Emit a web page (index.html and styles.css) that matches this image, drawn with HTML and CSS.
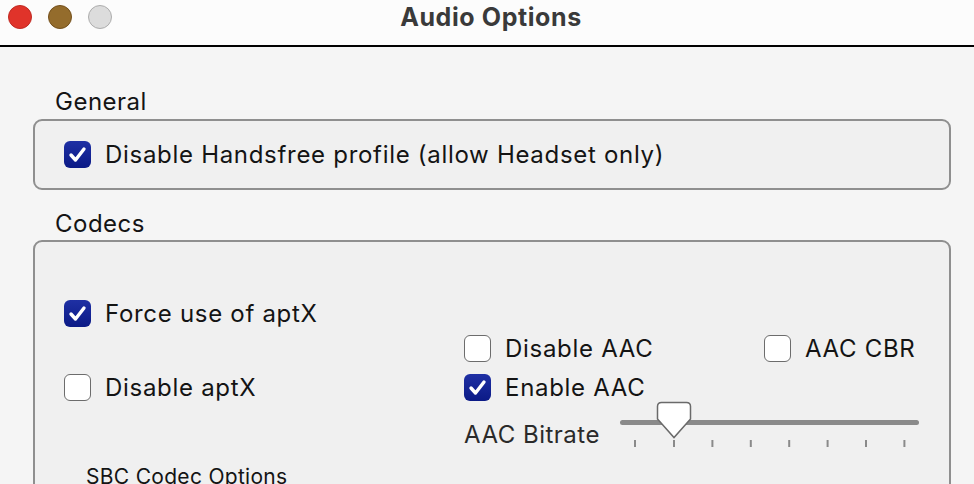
FILE: index.html
```html
<!DOCTYPE html>
<html lang="en">
<head>
    <meta charset="UTF-8">
    <title>Audio Options</title>
    <link rel="stylesheet" href="styles.css">
</head>
<body>
    <header class="titlebar">
        <div class="lights">
            <span class="light light-close"></span>
            <span class="light light-min"></span>
            <span class="light light-zoom"></span>
        </div>
        <h1 class="title">Audio Options</h1>
        <div></div>
    </header>

    <main class="content">
        <h2 class="group-label">General</h2>
        <section class="group group-general">
            <label class="check">
                <span class="box checked"><svg viewBox="0 0 27 27"><path d="M7 14 L11.5 19 L20 8"/></svg></span>
                Disable Handsfree profile (allow Headset only)
            </label>
        </section>

        <h2 class="group-label">Codecs</h2>
        <section class="group group-codecs">
            <div class="codec-cols">
                <div class="col col-aptx">
                    <label class="check">
                        <span class="box checked"><svg viewBox="0 0 27 27"><path d="M7 14 L11.5 19 L20 8"/></svg></span>
                        Force use of aptX
                    </label>
                    <label class="check">
                        <span class="box"></span>
                        Disable aptX
                    </label>
                </div>
                <div class="col col-aac">
                    <div class="aac-row">
                        <label class="check check-wide">
                            <span class="box"></span>
                            Disable AAC
                        </label>
                        <label class="check">
                            <span class="box"></span>
                            AAC CBR
                        </label>
                    </div>
                    <label class="check">
                        <span class="box checked"><svg viewBox="0 0 27 27"><path d="M7 14 L11.5 19 L20 8"/></svg></span>
                        Enable AAC
                    </label>
                    <div class="bitrate">
                        <span class="bitrate-label">AAC Bitrate</span>
                        <svg class="slider" width="310" height="50" viewBox="0 0 310 50">
                            <line class="track" x1="7.5" y1="22.5" x2="301.5" y2="22.5"/>
                            <g class="ticks">
                                <line x1="20" y1="40" x2="20" y2="47"/>
                                <line x1="59" y1="40" x2="59" y2="47"/>
                                <line x1="97.4" y1="40" x2="97.4" y2="47"/>
                                <line x1="135.8" y1="40" x2="135.8" y2="47"/>
                                <line x1="174.2" y1="40" x2="174.2" y2="47"/>
                                <line x1="212.6" y1="40" x2="212.6" y2="47"/>
                                <line x1="251" y1="40" x2="251" y2="47"/>
                                <line x1="289.4" y1="40" x2="289.4" y2="47"/>
                            </g>
                            <path class="knob" d="M46.5 2.5 H71.5 Q75.5 2.5 75.5 6.5 V19 L59 37.5 L42.5 19 V6.5 Q42.5 2.5 46.5 2.5 Z"/>
                        </svg>
                    </div>
                </div>
            </div>
            <h3 class="sub-label">SBC Codec Options</h3>
        </section>
    </main>
</body>
</html>
```

FILE: styles.css
```css
body {
    margin: 0;
    background-color: #f5f5f5;
    font-family: Inter, "Noto Sans", sans-serif;
    color: #141414;
    overflow: hidden;
}

.titlebar {
    display: grid;
    grid-template-columns: 1fr auto 1fr;
    align-items: start;
    height: 47px;
    padding-top: 5px;
    box-sizing: border-box;
    background-color: #fcfcfc;
    border-bottom: 2px solid #000;
}

.lights {
    display: flex;
    gap: 16px;
    padding-left: 8px;
}

.light {
    width: 22px;
    height: 22px;
    border-radius: 50%;
    border: 1px solid;
}

.light-close {
    background-color: #e0332a;
    border-color: #c02a22;
}

.light-min {
    background-color: #946c2c;
    border-color: #74501c;
}

.light-zoom {
    background-color: #dcdcdc;
    border-color: #adadad;
}

.title {
    margin: 0;
    padding-left: 8px;
    font-size: 25px;
    line-height: 24px;
    font-weight: 700;
    letter-spacing: 0.6px;
    color: #3a3a3a;
}

.content {
    padding: 42px 23px 0 33px;
}

.group-label {
    margin: 0 0 3px 22px;
    font-size: 24px;
    font-weight: 400;
    line-height: 26px;
    letter-spacing: 0.5px;
}

.group-label:first-child {
    margin-bottom: 4px;
}

.group {
    background-color: #f0f0f0;
    border: 2px solid #8f8f8f;
    border-radius: 9px;
}

.group-general {
    height: 67px;
    display: flex;
    align-items: center;
    padding-left: 29px;
    margin-bottom: 21px;
}

.check {
    display: flex;
    align-items: center;
    gap: 14px;
    height: 36px;
    font-size: 24px;
    letter-spacing: 0.7px;
    white-space: nowrap;
}

.check-wide {
    width: 300px;
}

.box {
    box-sizing: border-box;
    width: 27px;
    height: 27px;
    flex: none;
    border-radius: 6px;
    background-color: #fff;
    border: 1.5px solid #6c6c6c;
}

.box.checked {
    border: none;
    background: linear-gradient(#1f30a4, #0b1a86);
}

.box svg {
    display: block;
    width: 27px;
    height: 27px;
}

.box svg path {
    fill: none;
    stroke: #fff;
    stroke-width: 3.4;
    stroke-linecap: round;
    stroke-linejoin: round;
}

.group-codecs {
    height: 300px;
    padding-left: 29px;
}

.codec-cols {
    display: flex;
}

.col {
    display: flex;
    flex-direction: column;
}

.col-aptx {
    width: 400px;
    padding-top: 53px;
    gap: 38px;
}

.col-aac {
    padding-top: 88px;
    gap: 3px;
}

.aac-row {
    display: flex;
}

.bitrate {
    display: flex;
    align-items: flex-start;
    margin-top: -8px;
}

.bitrate-label {
    width: 151px;
    padding-top: 20px;
    font-size: 24px;
    letter-spacing: 0.5px;
    color: #2a2a2a;
}

.slider {
    display: block;
}

.track {
    stroke: #8a8a8a;
    stroke-width: 5;
    stroke-linecap: round;
}

.ticks line {
    stroke: #8a8a8a;
    stroke-width: 2;
}

.knob {
    fill: #fff;
    stroke: #6a6a6a;
    stroke-width: 1.5;
}

.sub-label {
    margin: 14px 0 0 22px;
    font-size: 21px;
    font-weight: 400;
    letter-spacing: 0.3px;
}
```
